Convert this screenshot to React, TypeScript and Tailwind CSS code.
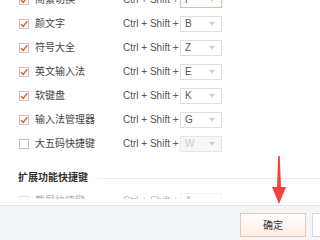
import React from 'react';

type Row = { label: string; key: string; checked: boolean; disabled?: boolean; focused?: boolean };

const ROWS: Row[] = [
  { label: '简繁切换', key: 'P', checked: true, focused: true },
  { label: '颜文字', key: 'B', checked: true },
  { label: '符号大全', key: 'Z', checked: true },
  { label: '英文输入法', key: 'E', checked: true },
  { label: '软键盘', key: 'K', checked: true },
  { label: '输入法管理器', key: 'G', checked: true },
  { label: '大五码快捷键', key: 'W', checked: false, disabled: true },
];

function CheckBox({ checked }: { checked: boolean }) {
  return (
    <div className="w-[10px] h-[10px] border border-[#c4c4c4] bg-white flex items-center justify-center shrink-0">
      {checked && (
        <svg width="8" height="8" viewBox="0 0 8 8">
          <polyline points="1,4.2 3.2,6.4 7.2,1.2" fill="none" stroke="#ea5a3c" strokeWidth="1.5" />
        </svg>
      )}
    </div>
  );
}

function KeySelect({ value, disabled, focused }: { value: string; disabled?: boolean; focused?: boolean }) {
  const box = disabled
    ? 'bg-[#f5f7fa] border-[#e4e7ed] text-[#c8ccd2]'
    : focused
      ? 'bg-white border-[#f3b3a0] text-[#555]'
      : 'bg-white border-[#dcdfe6] text-[#555]';
  return (
    <div className={`w-[42px] h-[16px] border flex items-center justify-between pl-[4px] pr-[6px] ${box}`}>
      <span className="text-[10px] leading-none">{value}</span>
      <svg width="6" height="4" viewBox="0 0 6 4">
        <polygon points="0,0 6,0 3,3.5" fill="#c6c9ce" />
      </svg>
    </div>
  );
}

function ShortcutRow({ row }: { row: Row }) {
  return (
    <div className="h-[24px] flex items-center pl-[19px]">
      <CheckBox checked={row.checked} />
      <span className="ml-[6px] w-[88px] text-[10px] text-[#444] leading-none">{row.label}</span>
      <span className="w-[57px] text-[10px] text-[#555] leading-none">Ctrl + Shift +</span>
      <KeySelect value={row.key} disabled={row.disabled} focused={row.focused} />
    </div>
  );
}

export default function App() {
  return (
    <div
      className="w-[320px] h-[240px] overflow-hidden relative bg-white flex flex-col"
      style={{ fontFamily: '"Liberation Sans", "Noto Sans CJK SC", sans-serif' }}
    >
      <div className="flex-1 overflow-hidden">
        <div className="-mt-[12px]">
          {ROWS.map((row) => (
            <ShortcutRow key={row.label} row={row} />
          ))}
          <div className="h-[20px] mt-[12px] flex items-center pl-[18px]">
            <span className="text-[10px] font-semibold text-[#333] leading-none">扩展功能快捷键</span>
            <div className="flex-1 h-px bg-[#ebebeb] ml-[9px]" />
          </div>
          {/* next row, mostly scrolled under the footer */}
          <div className="mt-[1px] h-[10px] overflow-hidden opacity-40">
            <ShortcutRow row={{ label: '截屏快捷键', key: 'A', checked: false }} />
          </div>
        </div>
      </div>

      <div className="h-[35px] shrink-0 border-t border-[#dfe3e8] bg-[#f3f5f8] flex justify-end items-start pt-[7px] gap-[6px]">
        <button className="w-[66px] h-[24px] shrink-0 border border-[#f0c6b2] bg-gradient-to-b from-white to-[#fdece3] text-[10px] text-[#333]">
          确定
        </button>
        <button className="w-[66px] h-[24px] shrink-0 -mr-[58px] border border-[#d6d9de] bg-white text-[10px] text-[#333]">
          取消
        </button>
      </div>

      <svg className="absolute left-[271px] top-[156px]" width="16" height="50" viewBox="0 0 16 50">
        <polygon points="7.2,0 8.8,0 10,31 15,31 8,48 1,31 6,31" fill="#f0443c" />
      </svg>
    </div>
  );
}
